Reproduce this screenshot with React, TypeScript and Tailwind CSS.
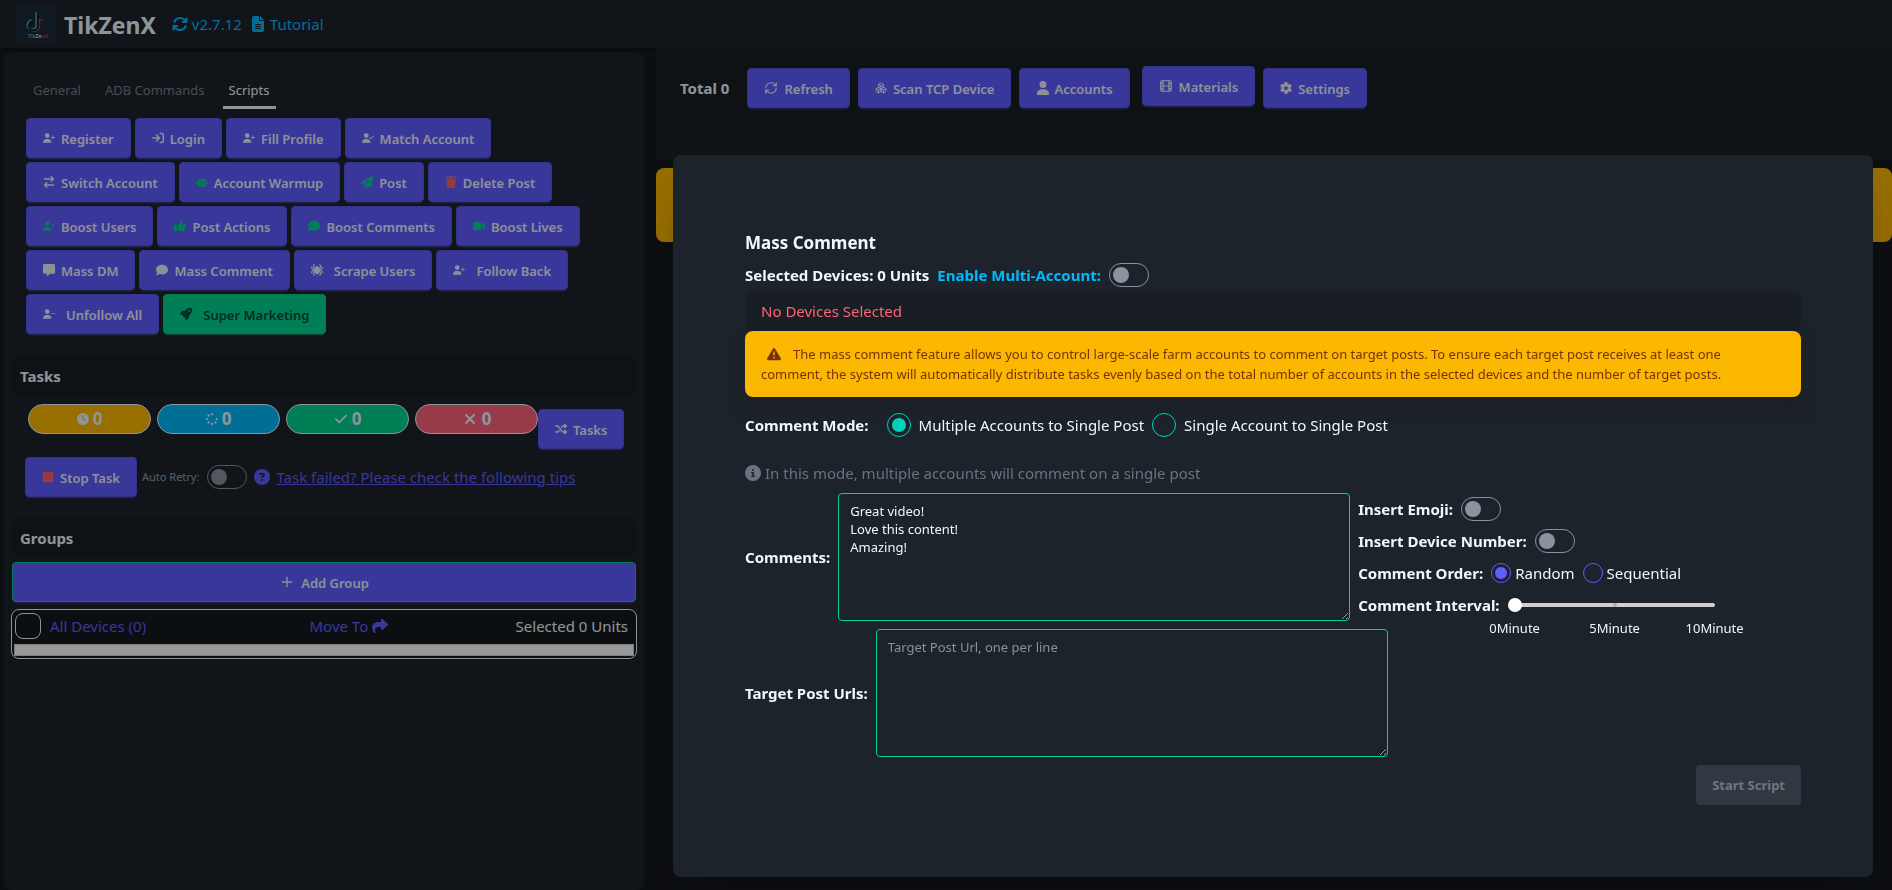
import { useState } from "react";
import type { ReactNode } from "react";
import type { IconType } from "react-icons";
import { Boxes, Film, Plus, RefreshCw } from "lucide-react";
import type { LucideIcon } from "lucide-react";
import {
  FaArrowRightArrowLeft,
  FaArrowRightToBracket,
  FaArrowsRotate,
  FaCheck,
  FaCircleInfo,
  FaCircleQuestion,
  FaClock,
  FaComment,
  FaCommentDots,
  FaFileLines,
  FaGear,
  FaMessage,
  FaPaperPlane,
  FaRobot,
  FaRocket,
  FaShare,
  FaShuffle,
  FaSpider,
  FaSpinner,
  FaSquare,
  FaThumbsUp,
  FaTrash,
  FaTriangleExclamation,
  FaUser,
  FaUserCheck,
  FaUserMinus,
  FaUserPlus,
  FaVideo,
  FaXmark,
} from "react-icons/fa6";

type Script = { label: string; icon: IconType; color?: string; wide?: boolean; accent?: boolean };

const SCRIPTS: Script[][] = [
  [
    { label: "Register", icon: FaUserPlus },
    { label: "Login", icon: FaArrowRightToBracket },
    { label: "Fill Profile", icon: FaUserPlus },
    { label: "Match Account", icon: FaUserCheck },
  ],
  [
    { label: "Switch Account", icon: FaArrowRightArrowLeft },
    { label: "Account Warmup", icon: FaRobot, color: "text-[#00d390]" },
    { label: "Post", icon: FaPaperPlane, color: "text-[#00d390]" },
    { label: "Delete Post", icon: FaTrash, color: "text-[#ff6266]" },
  ],
  [
    { label: "Boost Users", icon: FaUserPlus, color: "text-[#00d390]" },
    { label: "Post Actions", icon: FaThumbsUp, color: "text-[#00d390]" },
    { label: "Boost Comments", icon: FaCommentDots, color: "text-[#00d390]" },
    { label: "Boost Lives", icon: FaVideo, color: "text-[#00d390]" },
  ],
  [
    { label: "Mass DM", icon: FaMessage },
    { label: "Mass Comment", icon: FaComment },
    { label: "Scrape Users", icon: FaSpider, wide: true },
    { label: "Follow Back", icon: FaUserPlus, wide: true },
  ],
  [
    { label: "Unfollow All", icon: FaUserMinus, wide: true },
    { label: "Super Marketing", icon: FaRocket, wide: true, accent: true },
  ],
];

const COUNTERS = [
  { name: "Waiting", icon: FaClock, bg: "bg-[#fcb700]", size: "h-3 w-3" },
  { name: "Running", icon: FaSpinner, bg: "bg-[#00bafe]", size: "h-3 w-3" },
  { name: "Done", icon: FaCheck, bg: "bg-[#00d390]", size: "h-3.5 w-3.5" },
  { name: "Failed", icon: FaXmark, bg: "bg-[#ff627d]", size: "h-4 w-4" },
];

const BTN = "inline-flex h-10 items-center justify-center rounded border px-4 pt-1 text-[13px] font-semibold";
const PRIMARY = "border-[#5754e8] bg-[#605dff] text-[#edf1fe] shadow-[0_3px_2px_-2px_#605dff80]";
const OUTLINED = "border-[#00d390] bg-[#605dff] text-[#edf1fe] shadow-[0_3px_2px_-2px_#605dff80]";
const ACCENT = "border-[#00d390] bg-[#00d390] text-[#004c39] shadow-[0_3px_2px_-2px_#00d39080]";

type BtnProps = {
  icon: IconType | LucideIcon;
  children: ReactNode;
  tone?: string;
  iconClass?: string;
  className?: string;
};

function Btn({ icon: Icon, children, tone = PRIMARY, iconClass = "h-3 w-3", className = "gap-1.5" }: BtnProps) {
  return (
    <button type="button" className={`${BTN} ${tone} ${className}`}>
      <Icon className={`-mt-1 ${iconClass}`} />
      {children}
    </button>
  );
}

function Toggle({ label }: { label: string }) {
  return (
    <input
      type="checkbox"
      role="switch"
      aria-label={label}
      className="h-6 w-10 shrink-0 appearance-none rounded-full border border-[#8a919b] p-[3px] before:block before:h-4 before:w-4 before:rounded-full before:bg-[#8a939f] checked:before:ml-4"
    />
  );
}

function Logo() {
  return (
    <svg viewBox="0 0 40 40" className="h-10 w-10" role="img" aria-label="TikZenX">
      <rect width="40" height="40" fill="#1c283a" />
      <g fill="none" strokeWidth="2.5">
        <path d="M20.5 8v13a4.500 4.500 0 1 1-4.500-4.500M20.500 9c.5 3 3 5 6 5" stroke="#3b8f9d" />
        <path d="M23 10v12a5 5 0 0 1-8 4M23 13c1 1.500 2.500 2.500 4.500 2.500" stroke="#b5343c" />
        <path d="M22 9v13a4.500 4.500 0 1 1-5-4.500M22 10c1 3 3 4.500 5 4.500" stroke="#12151f" strokeWidth="1.8" />
      </g>
      <text x="12" y="34" fontSize="5" fontWeight="700" fontFamily="Open Sans, sans-serif" fill="#3fa9b5">
        Tik<tspan fill="#d8d8d8">Ze</tspan><tspan fill="#d0303c">nX</tspan>
      </text>
    </svg>
  );
}

function Header() {
  return (
    <header className="flex h-12 items-center bg-[#1d232a] px-4 shadow-[0_2px_4px_#00000040]">
      <Logo />
      <h1 className="ml-2 pt-0.5 text-[23px] font-bold">TikZenX</h1>
      <a href="#version" className="ml-4 flex items-center gap-1 text-[15px] text-[#00bafe]">
        <FaArrowsRotate className="h-4 w-4" />
        v2.7.12
      </a>
      <a href="#tutorial" className="ml-2 flex items-center gap-1 text-[15px] text-[#00bafe]">
        <FaFileLines className="h-4 w-4" />
        Tutorial
      </a>
    </header>
  );
}

function ScriptsCard() {
  return (
    <section className="rounded-lg border border-[#191e24] p-3 pb-[13px]">
      <nav className="flex gap-6 px-2 text-[13px]">
        <button type="button" className="h-9 text-[#7a8087]">General</button>
        <button type="button" className="h-9 text-[#7a8087]">ADB Commands</button>
        <button type="button" className="-mx-1.5 h-9 border-b-3 border-[#ecf9ff] px-1.5 pt-0.5">Scripts</button>
      </nav>
      <div className="mt-[9px] space-y-1 pl-px">
        {SCRIPTS.map((row) => (
          <div key={row[0].label} className="flex gap-1">
            {row.map((s) => (
              <Btn
                key={s.label}
                icon={s.icon}
                tone={s.accent ? ACCENT : PRIMARY}
                iconClass={`h-3 w-3 ${s.color ?? ""}`}
                className={s.wide ? "gap-[11px]" : "gap-1.5"}
              >
                {s.label}
              </Btn>
            ))}
          </div>
        ))}
      </div>
    </section>
  );
}

function TasksCard() {
  return (
    <section className="mt-2">
      <h2 className="flex h-10 items-center rounded-lg bg-[#191e24] px-2 text-[15px] font-bold">Tasks</h2>
      <div className="rounded-lg border border-[#191e24] px-3 pt-[7px] pb-2">
        <div className="flex items-start pl-[3px]">
          <div className="flex gap-1.5">
            {COUNTERS.map(({ name, icon: Icon, bg, size }) => (
              <div
                key={name}
                title={name}
                className={`flex h-[30px] w-[123px] items-center justify-center gap-1 rounded-full border border-[#ecf9ff] text-[17px] font-bold ${bg}`}
              >
                <Icon className={size} />0
              </div>
            ))}
          </div>
          <Btn icon={FaShuffle} className="mt-[5px] gap-1.5">Tasks</Btn>
        </div>
        <div className="mt-1 flex items-center">
          <Btn icon={FaSquare} iconClass="h-3 w-3 text-[#ff6266]">Stop Task</Btn>
          <label className="flex h-12 items-center gap-2 rounded-lg border border-[#191e24] px-1 text-[11px] text-[#989ea5]">
            Auto Retry:
            <Toggle label="Auto Retry" />
          </label>
          <a href="#tips" className="ml-0.5 flex items-center gap-1.5 text-[15px] text-[#605dff] underline">
            <FaCircleQuestion className="h-4 w-4" />
            Task failed? Please check the following tips
          </a>
        </div>
      </div>
    </section>
  );
}

function GroupsCard() {
  return (
    <section className="mt-2">
      <h2 className="flex h-10 items-center rounded-lg bg-[#191e24] px-2 text-[15px] font-bold">Groups</h2>
      <Btn icon={Plus} tone={OUTLINED} iconClass="h-4 w-4" className="mt-1 w-full gap-1.5">
        Add Group
      </Btn>
      <div className="-mx-px mt-[7px] rounded-lg border border-[#ecf9ff] bg-[#15191e] p-0.5 text-[15px]">
        <div className="flex items-center justify-between px-px pt-px pr-1.5">
          <label className="flex items-center gap-[9px] text-[#605dff]">
            <input
              type="checkbox"
              className="h-[26px] w-[26px] appearance-none rounded-lg border border-[#ecf9ff] checked:bg-[#605dff]"
            />
            All Devices (0)
          </label>
          <button type="button" className="ml-9 flex items-center gap-1 text-[#605dff]">
            Move To <FaShare className="h-4 w-4" />
          </button>
          <span>Selected 0 Units</span>
        </div>
        <div className="mt-[5px] h-3 border border-[#d0d0d0] bg-white" />
      </div>
    </section>
  );
}

function Toolbar() {
  return (
    <div className="bg-[#1a2026] pb-8">
      <div className="flex h-20 items-start bg-[#191e24] px-6 pt-5 text-[15px]">
        <span className="mt-[9px] mr-[18px] font-bold">Total 0</span>
        <div className="flex gap-2">
          <Btn icon={RefreshCw} iconClass="h-3.5 w-3.5">Refresh</Btn>
          <Btn icon={Boxes}>Scan TCP Device</Btn>
          <Btn icon={FaUser} iconClass="h-3.5 w-3.5" className="gap-1">Accounts</Btn>
          <Btn icon={Film} iconClass="h-3.5 w-3.5" className="-mt-0.5 ml-1 gap-1.5">Materials</Btn>
          <Btn icon={FaGear}>Settings</Btn>
        </div>
      </div>
    </div>
  );
}

const RADIO =
  "shrink-0 appearance-none rounded-full border checked:before:block checked:before:h-full checked:before:w-full checked:before:rounded-full";
const AREA =
  "h-32 w-[512px] rounded border border-[#00d390] bg-[#1d232a] px-[11px] py-2 text-[13px] leading-[18px] font-normal placeholder:text-[#8a919b]";

function CommentSettings() {
  const [minutes, setMinutes] = useState(0);
  return (
    <div className="space-y-2 pt-1 font-bold">
      <label className="flex h-6 items-center gap-2">
        Insert Emoji: <Toggle label="Insert Emoji" />
      </label>
      <label className="flex h-6 items-center gap-2">
        Insert Device Number: <Toggle label="Insert Device Number" />
      </label>
      <fieldset aria-label="Comment Order" className="flex h-6 items-center gap-2">
        <span>Comment Order:</span>
        {["Random", "Sequential"].map((order, i) => (
          <label key={order} className="flex items-center gap-1 font-normal">
            <input
              type="radio"
              name="order"
              defaultChecked={i === 0}
              className={`${RADIO} h-5 w-5 border-[#605dff] p-[3px] checked:before:bg-[#605dff]`}
            />
            {order}
          </label>
        ))}
      </fieldset>
      <div className="flex h-6 items-center gap-2">
        <label htmlFor="interval">Comment Interval:</label>
        <div className="relative h-6 w-[214px]">
          <div className="mx-[7px] mt-2.5 flex h-1 justify-center rounded-full bg-[#cfcfcf]">
            <span className="h-1 w-1 rounded-full bg-[#aaaaaa]" />
          </div>
          <input
            id="interval"
            type="range"
            min={0}
            max={10}
            value={minutes}
            onChange={(e) => setMinutes(Number(e.target.value))}
            className="absolute inset-0 w-full appearance-none bg-transparent [&::-webkit-slider-thumb]:h-3.5 [&::-webkit-slider-thumb]:w-3.5 [&::-webkit-slider-thumb]:appearance-none [&::-webkit-slider-thumb]:rounded-full [&::-webkit-slider-thumb]:bg-white"
          />
          <div className="absolute top-[26px] -left-[43px] grid w-[300px] grid-cols-3 text-center text-[13px] font-normal">
            <span>0Minute</span>
            <span>5Minute</span>
            <span>10Minute</span>
          </div>
        </div>
      </div>
    </div>
  );
}

function MassCommentDialog() {
  return (
    <div className="fixed inset-0 flex items-start justify-end overflow-hidden bg-black/40 pt-[155px] pr-[19px]">
      <div
        role="dialog"
        aria-labelledby="dialog-title"
        className="w-full max-w-[1200px] rounded-lg bg-[#1d232a] p-18 text-[15px] shadow-[0_25px_50px_-12px_#00000040]"
      >
        <h2 id="dialog-title" className="pt-0.5 text-[17px] leading-7 font-bold">Mass Comment</h2>
        <div className="mt-1.5 flex h-6 items-center gap-2 font-bold">
          <span>Selected Devices: 0 Units</span>
          <label className="flex items-center gap-2 text-[#00bafe]">
            Enable Multi-Account: <Toggle label="Enable Multi-Account" />
          </label>
        </div>
        <p className="mt-1 flex h-10 items-center rounded-lg bg-[#191e24] px-4 text-[#ff627d]">No Devices Selected</p>
        <div className="rounded-lg bg-[#fcb700] px-4 py-[13px] text-[13px] leading-5 text-[#793205] shadow-[0_12px_16px_#191e2480]">
          <FaTriangleExclamation className="mr-3 ml-1.5 inline h-3.5 w-3.5 align-[-2px]" />
          The mass comment feature allows you to control large-scale farm accounts to comment on target posts. To ensure each
          target post receives at least one
          <br />
          comment, the system will automatically distribute tasks evenly based on the total number of accounts in the selected
          devices and the number of target posts.
        </div>
        <fieldset aria-label="Comment Mode" className="mt-4 flex h-6 items-center gap-2">
          <span className="mr-2.5 font-bold">Comment Mode:</span>
          {["Multiple Accounts to Single Post", "Single Account to Single Post"].map((mode, i) => (
            <label key={mode} className="flex items-center gap-2">
              <input
                type="radio"
                name="mode"
                defaultChecked={i === 0}
                className={`${RADIO} h-6 w-6 border-[#00d3bb] p-1 checked:before:bg-[#00d3bb]`}
              />
              {mode}
            </label>
          ))}
        </fieldset>
        <p className="mt-6 flex h-6 items-center gap-1 text-[#6b7280]">
          <FaCircleInfo className="h-4 w-4" />
          In this mode, multiple accounts will comment on a single post
        </p>
        <div className="mt-2 flex gap-2">
          <label className="flex items-center gap-2 font-bold">
            Comments:
            <textarea className={AREA} defaultValue={"Great video!\nLove this content!\nAmazing!"} />
          </label>
          <CommentSettings />
        </div>
        <label className="mt-2 flex items-center gap-2 font-bold">
          Target Post Urls:
          <textarea className={AREA} placeholder="Target Post Url, one per line" />
        </label>
        <div className="mt-2 flex justify-end">
          <button type="button" disabled className="h-10 rounded bg-[#323841] px-4 pt-0.5 text-[13px] font-bold text-[#70767f]">
            Start Script
          </button>
        </div>
      </div>
    </div>
  );
}

export default function App() {
  return (
    <div className="min-h-screen bg-[#15191e] font-['Noto_Sans','Open_Sans',sans-serif] text-[#ecf9ff]">
      <Header />
      <main className="flex items-stretch">
        <aside className="mt-1 ml-1 min-h-[838px] w-[640px] shrink-0 rounded-lg bg-[#1d232a] p-2">
          <ScriptsCard />
          <TasksCard />
          <GroupsCard />
        </aside>
        <div className="ml-3 flex-1">
          <Toolbar />
          <div className="mt-2 h-[74px] rounded-lg bg-[#fcb700]" />
        </div>
      </main>
      <MassCommentDialog />
    </div>
  );
}
